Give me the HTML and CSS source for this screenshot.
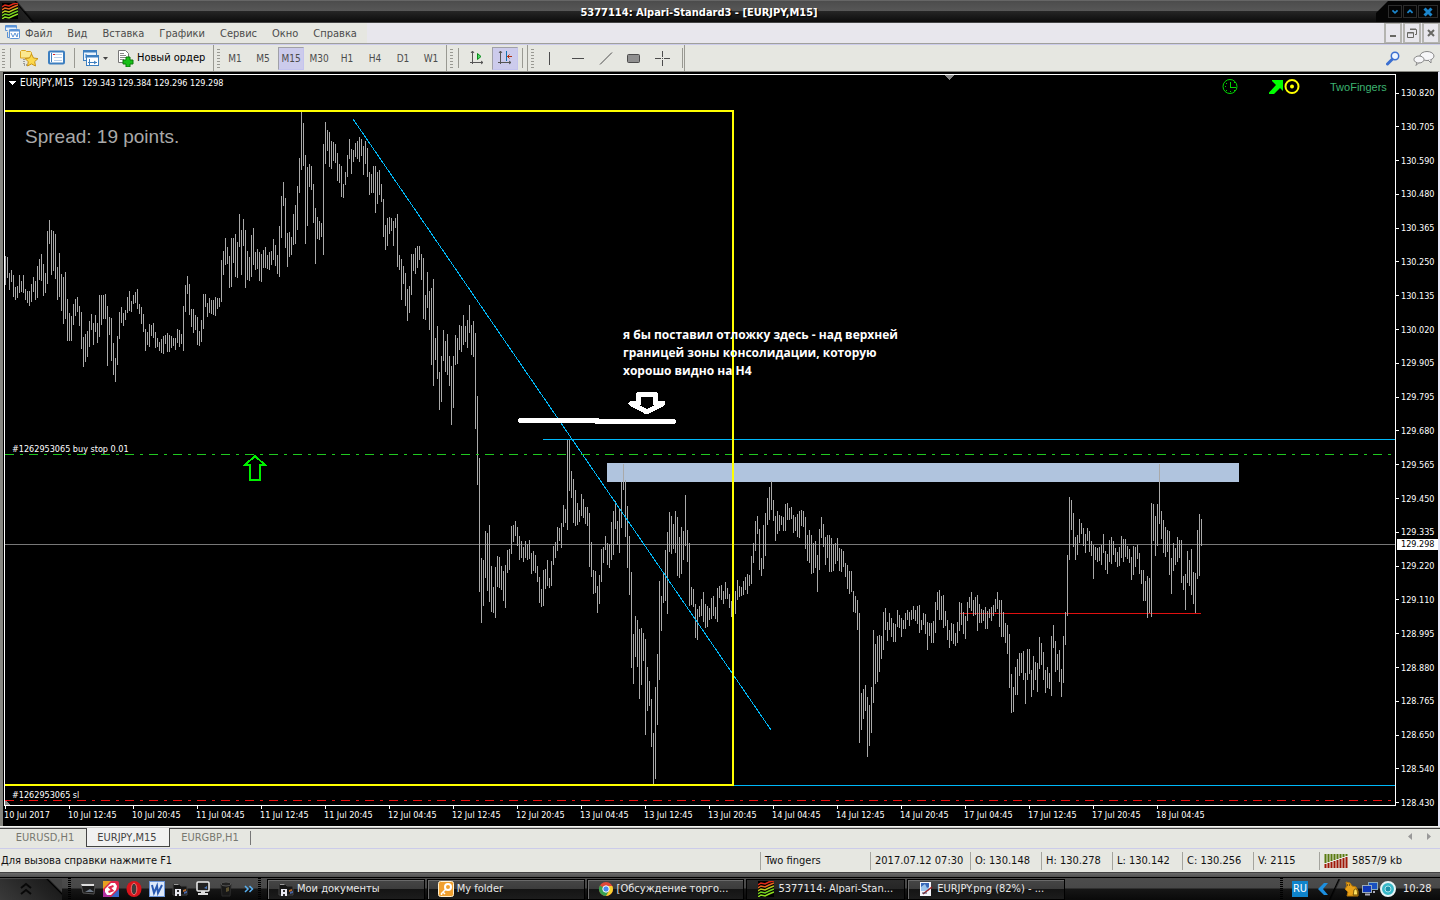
FILE: index.html
```html
<!DOCTYPE html>
<html lang="ru">
<head>
<meta charset="utf-8">
<title>5377114: Alpari-Standard3 - [EURJPY,M15]</title>
<link rel="stylesheet" href="styles.css">
</head>
<body>
<svg class="defs" aria-hidden="true">
  <symbol id="alpari" viewBox="0 0 16 16">
    <rect width="16" height="16" fill="#000"/>
    <g fill="none" stroke-width="1.5">
      <path stroke="#e02818" d="M0 4l3-2 4 1 4-2 5-1"/>
      <path stroke="#e86820" d="M0 7l3-2 4 1 4-2 5-2"/>
      <path stroke="#b8c820" d="M0 10l3-2 4 1 4-2 5-2"/>
      <path stroke="#70d020" d="M0 13l3-2 4 1 4-2 5-2"/>
      <path stroke="#90e020" d="M0 16l3-2 4 1 4-2 5-2"/>
    </g>
  </symbol>
  <symbol id="folder-dark" viewBox="0 0 16 16">
    <path d="M1 3h6l2 2h6v9H1z" fill="#161616" stroke="#444"/>
    <path d="M2 3h4l1 1H2z" fill="#999"/>
    <path d="M3 15V8h6v7H7v-2H5v2z" fill="#e8e8f0"/>
    <path d="M5 9h2v2H5z" fill="#333"/>
    <path d="M11 9l3-1v2l-3 1z" fill="#b46a30"/>
    <path d="M12 11l3-1v2l-3 1z" fill="#4a68a8"/>
  </symbol>
</svg>

<header class="titlebar">
  <span class="title-icon"><svg width="16" height="16"><use href="#alpari"/></svg></span>
  <h1>5377114: Alpari-Standard3 - [EURJPY,M15]</h1>
  <div class="win-buttons">
    <button type="button" aria-label="Свернуть"><svg width="12" height="12" viewBox="0 0 14 12"><path d="M4 4l3 3 3-3"/></svg></button>
    <button type="button" aria-label="Развернуть"><svg width="12" height="12" viewBox="0 0 14 12"><path d="M4 7l3-3 3 3"/></svg></button>
    <button type="button" aria-label="Закрыть" class="wide"><svg width="14" height="12" viewBox="0 0 14 12"><path class="cross" d="M3.500 2.500l7 7M10.500 2.500l-7 7"/></svg></button>
  </div>
</header>

<nav class="menubar">
  <div class="menu">
    <svg width="16" height="16" viewBox="0 0 16 16" fill="none" stroke="#5b93d6">
      <path d="M2.500 5.500h-2v-5h11v3" fill="#e8f2fc"/><path d="M1 1.500h10" stroke-width="2"/>
      <rect x="4.500" y="4.500" width="10" height="9" rx="1" fill="#fff"/><path d="M4 5.500h11" stroke-width="2"/>
      <path d="M6 8l2 4 2-4 2 4 1-4M2.500 7v5.500h2"/>
    </svg>
    <button type="button">Файл</button><button type="button">Вид</button><button type="button">Вставка</button><button type="button">Графики</button><button type="button">Сервис</button><button type="button">Окно</button><button type="button">Справка</button>
  </div>
  <div class="mdi">
    <button type="button" aria-label="Свернуть окно"><svg width="12" height="12" viewBox="0 0 12 12"><path d="M3 9h6" stroke-width="2"/></svg></button>
    <button type="button" aria-label="Восстановить окно"><svg width="12" height="12" viewBox="0 0 12 12"><path d="M4 2.500h6.500v5H9M1.500 5.500h6v5h-6zM1.500 6h6M4 2h6"/></svg></button>
    <button type="button" aria-label="Закрыть окно"><svg width="12" height="12" viewBox="0 0 12 12"><path d="M3 3l6 6M9 3l-6 6" stroke-width="2"/></svg></button>
  </div>
</nav>

<div class="toolbar">
  <div class="group g-main">
    <i class="grip"></i><i class="sep"></i>
    <button type="button" class="tool" aria-label="Шаблоны"><svg width="20" height="18" viewBox="0 0 20 18"><path d="M1.500 2.500l1-1h4l1 1h4l1 1v5.500h-11z" fill="#fbe88f" stroke="#d9a422"/><path d="M5 10v6h3" fill="none" stroke="#555" stroke-dasharray="1 1"/><path d="M12.500 5l2 4 4.500.6-3.300 3 .8 4.400-4-2.100-4 2.100.8-4.400-3.300-3 4.500-.6z" fill="#fcd94c" stroke="#c99416"/></svg></button>
    <button type="button" class="tool" aria-label="Обзор рынка"><svg width="18" height="16" viewBox="0 0 18 16"><rect x="1" y="1.500" width="15" height="12" rx="1" fill="#fff" stroke="#3d7fc0" stroke-width="2"/><path d="M3.500 3v9" stroke="#3d7fc0"/><path d="M6 4.500h8M6 7.500h8M6 10.500h8" stroke="#b9cfe8"/><path d="M5 4.500h2" stroke="#d22"/></svg></button>
    <i class="sep"></i>
    <button type="button" class="tool tool-drop" aria-label="Новый график"><svg width="26" height="18" viewBox="0 0 26 18" fill="none" stroke="#3d7fc0"><rect x="1.500" y="1.500" width="13" height="10" fill="#eaf3fc"/><path d="M1 2.500h14" stroke-width="2"/><rect x="4.500" y="6.500" width="12" height="10" fill="#fff"/><path d="M4 7.500h13" stroke-width="2"/><path d="M6 13.500h9M7.500 10v6M12 12l2 1.500-2 1.500M4 5v4"/><path d="M21 8h5l-2.500 3z" fill="#444" stroke="none"/></svg></button>
    <button type="button" class="tool order"><svg width="18" height="18" viewBox="0 0 18 18"><path d="M1.500 1.500h7l3 3v9h-10z" fill="#fff" stroke="#777"/><path d="M3 4.500h4M3 6.500h6M3 8.500h6M3 10.500h4" stroke="#888"/><path d="M9 8h4v3h3v4h-3v3H9v-3H6v-4h3z" fill="#18c018" stroke="#0a7a0a"/></svg>Новый ордер</button>
  </div>
  <div class="group g-tf">
    <i class="grip"></i>
    <button type="button" class="tf">M1</button><button type="button" class="tf">M5</button><button type="button" class="tf on">M15</button><button type="button" class="tf">M30</button><button type="button" class="tf">H1</button><button type="button" class="tf">H4</button><button type="button" class="tf">D1</button><button type="button" class="tf">W1</button>
  </div>
  <div class="group g-shift">
    <i class="grip"></i><i class="sep"></i>
    <button type="button" class="sq" aria-label="Автопрокрутка"><svg width="16" height="16" viewBox="0 0 16 16"><path d="M3.500 1v13M1 12.500h13M2 3l1.500-2L5 3M12 11l2 1.500-2 1.500" fill="none" stroke="#555"/><path d="M8.500 3.500v6l3.500-3z" fill="#4fdc6a" stroke="#0a8a1a"/></svg></button>
    <button type="button" class="sq on" aria-label="Сдвиг графика"><svg width="16" height="16" viewBox="0 0 16 16"><path d="M3.500 1v13M1 12.500h13M2 3l1.500-2L5 3M12 11l2 1.500-2 1.500" fill="none" stroke="#555"/><path d="M9.500 1v10" stroke="#1173b0"/><path d="M10 6.500h5M12.500 4.500l-2 2 2 2" fill="none" stroke="#b03010"/></svg></button>
    <i class="sep"></i>
  </div>
  <div class="group g-draw">
    <i class="grip"></i>
    <button type="button" class="draw" aria-label="Вертикальная линия"><svg width="16" height="16"><path d="M7.500 2v13"/></svg></button>
    <button type="button" class="draw" aria-label="Горизонтальная линия"><svg width="16" height="16"><path d="M2 8.500h12"/></svg></button>
    <button type="button" class="draw" aria-label="Трендовая линия"><svg width="16" height="16"><path d="M2 14.500L14 2.500"/></svg></button>
    <button type="button" class="draw" aria-label="Прямоугольник"><svg width="16" height="16"><rect x="1.500" y="4.500" width="12" height="8" rx="1" fill="#909090"/></svg></button>
    <button type="button" class="draw" aria-label="Перекрестие"><svg width="16" height="16"><path d="M8.500 1v6M8.500 10v6M1 8.500h6M10 8.500h6M8 8.500h1"/></svg></button>
    <i class="sep"></i>
  </div>
  <div class="toolbar-end">
    <button type="button" class="tool" aria-label="Поиск"><svg width="15" height="15" viewBox="0 0 15 15"><path d="M1.500 13L6 8.500" stroke="#3b6fd0" stroke-width="3" stroke-linecap="round"/><circle cx="9" cy="5" r="3.700" fill="#eef6ff" stroke="#3b6fd0" stroke-width="1.500"/></svg></button>
    <button type="button" class="tool" aria-label="Сообщения"><svg width="22" height="17" viewBox="0 0 22 17" fill="#f6f6f8" stroke="#888"><ellipse cx="14" cy="6" rx="7" ry="4.500"/><path d="M15 10l3 3v-3.500"/><ellipse cx="6" cy="9.500" rx="5" ry="3.500"/><path d="M4 12.500l-1 3 3-3"/></svg></button>
  </div>
</div>

<main class="chart">
  <div class="plot">
    <svg class="canvas" viewBox="5 75 1390 730" preserveAspectRatio="xMinYMin meet">
      <path d="M8 81h8l-4 4z" fill="#fff"/>
      <path d="M944 75h10l-5 5z" fill="#888"/>
      <path d="M5 800v5h6z" fill="#888"/>
      <rect x="607" y="463" width="632" height="19" fill="#b0c4de"/>
      <path d="M5 544.500H1395" stroke="#787878"/>
      <path d="M960 613.500H1201" stroke="#e01010"/>
      <path id="bars" stroke="#a9a9a9"/>
      <path d="M543 439.500H1395M734 785.500H1395M353 119L771 730" stroke="#00b8f8" fill="none"/>
      <path class="pending" d="M5 454.500H1392" stroke="#20c820"/>
      <path class="pending" d="M5 800.500H1392" stroke="#f01010"/>
      <path d="M5 111H733V785H5" fill="none" stroke="#ff0" stroke-width="2"/>
      <path d="M255 456l10 9h-5v15h-10v-15h-5z" fill="none" stroke="#00f000" stroke-width="2"/>
      <g fill="none" stroke="#fff" stroke-width="5" stroke-linecap="round" stroke-linejoin="round">
        <path d="M520.500 420.500H597M597 421.500H673.500M638.500 394.500H655.500V403.500H663L647 412L631 403.500H638.500Z"/>
      </g>
      <g fill="none" stroke="#00d800"><circle class="smooth" cx="1230" cy="86.500" r="7"/><path d="M1230.500 82v5h5M1225 86.500h1M1230.500 91v1M1226.500 83v1M1226.500 90v1M1234.500 90v1M1234.500 82v1"/></g>
      <path class="smooth" d="M1272 80h11v11l-3-3-6 6h-5v-1.500l7-7.500-4-4z" fill="#0f0"/>
      <circle cx="1292" cy="86.500" r="6.500" fill="none" stroke="#ff0" stroke-width="2"/><circle cx="1292" cy="86.500" r="2" fill="#ff0"/>
      <text class="symbol" x="20" y="86">EURJPY,M15</text>
      <text class="tiny" x="82" y="86">129.343</text><text class="tiny" x="118" y="86">129.384</text><text class="tiny" x="154" y="86">129.296</text><text class="tiny" x="190" y="86">129.298</text>
      <text class="tiny" x="12" y="452">#1262953065 buy stop 0.01</text>
      <text class="tiny" x="12" y="798">#1262953065 sl</text>
      <text class="spread" x="25" y="143">Spread: 19 points.</text>
      <text class="expert" x="1330" y="91">TwoFingers</text>
      <text class="note"><tspan x="623" y="339">я бы поставил отложку здесь - над верхней</tspan><tspan x="623" y="357">границей зоны консолидации, которую</tspan><tspan x="623" y="375">хорошо видно на H4</tspan></text>
    </svg>
  </div>
  <div class="prices">
    <span>130.820</span><span>130.705</span><span>130.590</span><span>130.480</span><span>130.365</span><span>130.250</span><span>130.135</span><span>130.020</span><span>129.905</span><span>129.795</span><span>129.680</span><span>129.565</span><span>129.450</span><span>129.335</span><span>129.220</span><span>129.110</span><span>128.995</span><span>128.880</span><span>128.765</span><span>128.650</span><span>128.540</span><span>128.430</span>
    <b class="now">129.298</b>
  </div>
  <div class="times">
    <span>10 Jul 2017</span><span>10 Jul 12:45</span><span>10 Jul 20:45</span><span>11 Jul 04:45</span><span>11 Jul 12:45</span><span>11 Jul 20:45</span><span>12 Jul 04:45</span><span>12 Jul 12:45</span><span>12 Jul 20:45</span><span>13 Jul 04:45</span><span>13 Jul 12:45</span><span>13 Jul 20:45</span><span>14 Jul 04:45</span><span>14 Jul 12:45</span><span>14 Jul 20:45</span><span>17 Jul 04:45</span><span>17 Jul 12:45</span><span>17 Jul 20:45</span><span>18 Jul 04:45</span>
  </div>
</main>

<div class="tabs">
  <button type="button">EURUSD,H1</button><button type="button" class="on">EURJPY,M15</button><button type="button">EURGBP,H1</button><i></i>
  <div class="tab-scroll">
    <button type="button" aria-label="Назад"><svg width="5" height="7"><path d="M4 0v7L0 3.500z"/></svg></button>
    <button type="button" aria-label="Вперёд"><svg width="5" height="7"><path d="M0 0v7l4-3.500z"/></svg></button>
  </div>
</div>

<footer class="status">
  <span class="help">Для вызова справки нажмите F1</span>
  <span class="c110">Two fingers</span><span class="c100">2017.07.12 07:30</span><span class="c71">O: 130.148</span><span class="c71">H: 130.278</span><span class="c70">L: 130.142</span><span class="c71">C: 130.256</span><span class="c66">V: 2115</span>
  <span class="c121"><svg width="24" height="14" viewBox="0 0 24 14"><path d="M1.500 0v9M4.500 0v8M7.500 0v7M10.500 0v6M13.500 0v5M16.500 0v4M19.500 0v3M22.500 0v2" stroke="#5a7a10" stroke-width="2"/><path d="M1.500 10v4M4.500 9v5M7.500 8v6M10.500 7v7M13.500 6v8M16.500 5v9M19.500 4v10M22.500 3v11" stroke="#a01808" stroke-width="2"/></svg>5857/9 kb</span>
</footer>

<div class="taskbar">
  <button type="button" class="start" aria-label="Пуск"><svg width="14" height="14" viewBox="0 0 14 14" fill="none" stroke="#080808" stroke-width="2"><path d="M2 6l5-4 5 4M2 12l5-4 5 4"/></svg></button>
  <i class="dots"></i>
  <div class="quick">
    <button type="button" aria-label="Рабочий стол"><svg width="16" height="16" viewBox="0 0 16 16"><path d="M1 3h13l1 2-1 8-11-1z" fill="#1c1c1c" stroke="#555"/><path d="M1 3h13v2H2z" fill="#ddd"/><path d="M5 11l5-3 4 3z" fill="#6d7886"/></svg></button>
    <button type="button" aria-label="Программа"><svg width="16" height="16" viewBox="0 0 16 16"><rect width="16" height="16" rx="2" fill="#e0254c"/><path d="M0 0h8L0 8z" fill="#e8a020"/><path d="M16 16H8l8-8z" fill="#3868c8"/><path d="M8 16H0V9z" fill="#b030a0"/><path d="M2 8l6-6h4l2 3-1 4-5 5H4l-2-3z" fill="#fff"/><path d="M10.500 5l-4 1.500 3 3-4 1.500" stroke="#e0254c" stroke-width="2" fill="none"/></svg></button>
    <button type="button" aria-label="Opera"><svg width="16" height="16" viewBox="0 0 16 16"><ellipse cx="8" cy="8" rx="7.500" ry="8" fill="#d8141c"/><ellipse cx="8" cy="8" rx="2.800" ry="5.800" fill="#3c3c3c" stroke="#f07070"/></svg></button>
    <button type="button" aria-label="Word"><svg width="16" height="16" viewBox="0 0 16 16"><rect x=".5" y=".5" width="15" height="15" fill="#dce8fa" stroke="#6a94d8"/><path d="M3 4l2 8 3-7 1 7 4-8" fill="none" stroke="#2858b0" stroke-width="2"/></svg></button>
    <button type="button" aria-label="Документы"><svg width="16" height="16"><use href="#folder-dark"/></svg></button>
    <button type="button" aria-label="Компьютер"><svg width="16" height="16" viewBox="0 0 16 16"><rect x="2" y="1" width="12" height="9" rx="1" fill="#222" stroke="#eee" stroke-width="1.500"/><path d="M9 7l3-2v3z" fill="#4a78c0"/><path d="M6 10h4v2h3v2H3v-2h3z" fill="#ddd"/></svg></button>
    <button type="button" aria-label="Корзина"><svg width="16" height="16" viewBox="0 0 16 16"><path d="M3 3h10l-1 12H4z" fill="#181818" stroke="#2a2a2a"/><ellipse cx="8" cy="3" rx="5" ry="2" fill="#222" stroke="#555"/><path d="M8 7l3-1v4l-3 1z" fill="#5a5030"/></svg></button>
    <button type="button" aria-label="Ещё"><svg width="10" height="8" viewBox="0 0 10 8" fill="none" stroke="#58b0f0" stroke-width="1.500"><path d="M1 1l3 3-3 3M5.500 1l3 3-3 3"/></svg></button>
  </div>
  <i class="dots"></i>
  <div class="tasks">
    <button type="button"><svg width="16" height="16"><use href="#folder-dark"/></svg><span>Мои документы</span></button>
    <button type="button"><svg width="16" height="16" viewBox="0 0 16 16"><rect x=".5" y=".5" width="15" height="15" rx="2" fill="#f0a030" stroke="#fff0d0"/><circle cx="10" cy="6" r="3" fill="none" stroke="#fff" stroke-width="2"/><path d="M8 8l-4.500 4.500v1.500M5 11l2 2" stroke="#fff" stroke-width="1.500" fill="none"/></svg><span>My folder</span></button>
    <button type="button"><svg width="16" height="16" viewBox="0 0 16 16"><circle cx="8" cy="8" r="7" fill="#e04838"/><path d="M8 8L1.900 4.500A7 7 0 0 0 8 15l3-5z" fill="#38a050"/><path d="M8 8h0l3 2-3 5A7 7 0 0 0 14.300 5H8z" fill="#f8d030"/><circle cx="8" cy="8" r="3.200" fill="#4888f0" stroke="#fff"/></svg><span>[Обсуждение торго...</span></button>
    <button type="button" class="on"><svg width="16" height="16"><use href="#alpari"/></svg><span>5377114: Alpari-Stan...</span></button>
    <button type="button"><svg width="16" height="16" viewBox="0 0 16 16"><rect x="2" y="1" width="11" height="14" fill="#f4f4fa"/><rect x="3" y="2" width="8" height="8" fill="#3868b8"/><path d="M3 6l4-3 2 4 2-1v4H3z" fill="#9cc4ec"/><path d="M5 13l9-7" stroke="#a02020" stroke-width="1.500"/><path d="M4 12h5" stroke="#446" /></svg><span>EURJPY.png (82%) - ...</span></button>
  </div>
  <i class="dots push"></i>
  <button type="button" class="lang">RU</button>
  <button type="button" class="expand" aria-label="Показать значки"><svg width="10" height="12" viewBox="0 0 10 12"><path d="M6 0h4L5 6l5 6H6L0 6z" fill="#1c8fe0"/></svg></button>
  <div class="tray">
    <svg width="16" height="16" viewBox="0 0 16 16"><path d="M2 1l4 1 2 3 4 1 2 4v5H3l1-4-3-3 2-3z" fill="#e8a018" stroke="#b87808"/><path d="M9 14c1-1 0-6 2.500-6s1.500 5 2.500 6z" fill="#ffe060" stroke="#6a4a00"/><path d="M3 4h1M5 4h1" stroke="#222"/></svg>
    <svg width="16" height="16" viewBox="0 0 16 16"><rect x="6.500" y="1.500" width="9" height="7" fill="#1850c0" stroke="#8ab"/><rect x=".5" y="4.500" width="9" height="7" fill="#1038b8" stroke="#9ab"/><path d="M3 13.500h5M12 10v2" stroke="#aab" stroke-width="2"/></svg>
    <svg width="16" height="16" viewBox="0 0 16 16"><circle cx="8" cy="8" r="7" fill="#38b8c8" stroke="#e8f4f6" stroke-width="2"/><circle cx="8" cy="8" r="3" fill="#1a90a8" stroke="#a8e4ea"/></svg>
    <time>10:28</time>
  </div>
</div>
<script src="chart.js"></script>
</body>
</html>
```
FILE: styles.css
```css
* { box-sizing: border-box; }
body {
  margin: 0;
  min-height: 100vh;
  display: flex;
  flex-direction: column;
  overflow: hidden;
  background: #e6e7e1;
  color: #111;
  font: 11px/14px "DejaVu Sans Condensed", "Noto Sans", sans-serif;
}
button {
  margin: 0;
  padding: 0;
  border: 0;
  background: none;
  color: inherit;
  font: inherit;
  display: flex;
  align-items: center;
  justify-content: center;
}
svg { display: block; flex: none; }
i { flex: none; }
.defs { position: absolute; width: 0; height: 0; }

/* Title bar */
.titlebar {
  height: 23px;
  display: flex;
  align-items: stretch;
  border-top: 1px solid #666;
  border-bottom: 1px solid #444;
  background: linear-gradient(#4c4c4c 0, #575757 10px, #262626 10px, #0c0c0c 21px);
  color: #fff;
}
.title-icon {
  width: 64px;
  padding: 2px;
  background: linear-gradient(50deg, #111 0, #222 24px, #000 25px, transparent 27px);
}
.titlebar h1 {
  flex: 1;
  margin: 0;
  padding-right: 42px;
  text-align: center;
  font-size: 11px;
  line-height: 23px;
  text-shadow: 1px 1px 1px #000;
}
.win-buttons {
  width: 64px;
  padding: 4px 2px 4px 12px;
  display: flex;
  gap: 1px;
  background: linear-gradient(135deg, transparent 8px, #050505 9px);
}
.win-buttons button { width: 14px; border: 1px solid #2c2c2c; }
.win-buttons .wide { width: 20px; }
.win-buttons path { fill: none; stroke: #1c86cc; stroke-width: 2; }
.win-buttons .cross { stroke-width: 3; }

/* Menu */
.menubar {
  height: 21px;
  display: flex;
  justify-content: space-between;
  border-bottom: 1px solid #a0a09c;
  background: #e8e7ed;
  color: #4c4c4c;
}
.menu {
  display: flex;
  align-items: center;
  gap: 15px;
  padding: 1px 10px 0 5px;
  background: #e6e7e1;
}
.menu svg { margin: 0 -11px 1px 0; }
.mdi { display: flex; gap: 1px; }
.mdi button { width: 18px; border: 1px solid #b4b4b0; border-width: 1px 2px; }
.mdi path { fill: none; stroke: #686864; }

/* Toolbar */
.toolbar {
  height: 27px;
  display: flex;
  border-top: 1px solid #ccccea;
  background: #e6e7e1;
}
.group {
  display: flex;
  align-items: center;
  padding-left: 2px;
  border-right: 1px solid #999992;
}
.grip {
  width: 3px;
  height: 19px;
  background: repeating-linear-gradient(#999992 0 1px, transparent 1px 3px);
}
.sep { width: 1px; height: 20px; background: #999992; }
.g-main { width: 214px; }
.g-main .grip + .sep { margin: 0 8px 0 5px; }
.g-main .tool + .sep { margin: 0 7px 0 8px; }
.g-main .tool + .tool { margin-left: 9px; }
.g-main .order { gap: 2px; white-space: nowrap; color: #000; }
.g-tf { width: 233px; }
.tf { width: 28px; height: 23px; padding-top: 1px; color: #4c4c4c; font-size: 10px; }
.g-tf .grip { margin: 0 1px; }
.tf.on, .sq.on {
  background: #cccbec;
  border: 1px solid #a0a0a8;
  border-right-color: #c4c4ee;
  border-bottom-color: #c4c4ee;
}
.tf.on { width: 26px; margin: 0 1px; }
.g-shift { width: 81px; }
.g-shift .grip { margin-left: 1px; }
.g-shift .grip + .sep { margin: 0 5px; }
.sq { width: 26px; height: 23px; }
.sq + .sq { margin-left: 2px; }
.sq + .sep { margin-left: 4px; }
.g-draw { width: 157px; }
.g-draw .grip { margin: 0 8px 0 1px; }
.draw { width: 28px; height: 23px; padding-right: 12px; }
.draw path, .draw rect { stroke: #4c4c4c; }
.draw path { fill: none; }
.toolbar-end {
  flex: 1;
  display: flex;
  align-items: center;
  justify-content: flex-end;
  gap: 12px;
  padding-right: 5px;
}

/* Chart */
.chart {
  flex: 1;
  min-height: 0;
  display: grid;
  grid-template-columns: minmax(0, 1fr) 42px;
  grid-template-rows: minmax(0, 1fr) 20px;
  padding: 2px 0 0 1px;
  border: solid #868680;
  border-width: 1px 2px 0 3px;
  border-right-color: #e4e4f6;
  background: #000;
  color: #fff;
  font-size: 9px;
}
.plot { border: 1px solid #fff; min-height: 0; min-width: 0; }
.canvas { width: 100%; height: 100%; }
.canvas path { shape-rendering: crispEdges; }
.canvas .smooth { shape-rendering: auto; }
.pending { stroke-dasharray: 9 6 3 6; }
.tiny { font-size: 9px; fill: #fff; }
.symbol { font-size: 10px; fill: #fff; }
.spread { font: 19px "Liberation Sans", sans-serif; fill: #a9a9a9; }
.expert { font: 11px "Liberation Sans", sans-serif; fill: #3cb371; }
.note { font: bold 12px "Open Sans", sans-serif; fill: #fff; }
.prices {
  grid-row: span 2;
  position: relative;
  display: flex;
  flex-direction: column;
  justify-content: space-between;
  padding: 12px 0 16px;
}
.prices span { display: flex; align-items: center; gap: 2px; }
.prices span::before { content: ""; width: 3px; height: 1px; background: #fff; }
.now {
  position: absolute;
  top: 465px;
  left: 1px;
  right: 0;
  padding-left: 4px;
  background: #fff;
  color: #000;
  font-weight: normal;
  line-height: 11px;
}
.times { display: flex; overflow: hidden; }
.times span { flex: none; width: 64px; padding-top: 2px; white-space: nowrap; position: relative; }
.times span::before {
  content: "";
  position: absolute;
  left: 1px;
  top: 0;
  width: 1px;
  height: 3px;
  background: #fff;
}

/* Chart tabs */
.tabs {
  height: 23px;
  display: flex;
  align-items: flex-start;
  padding-left: 2px;
  border-top: 1px solid #f4f4f0;
  border-bottom: 1px solid #ccccea;
  box-shadow: inset 0 1px #c8c8c8, inset 0 2px #444;
  color: #77776f;
}
.tabs > button { height: 19px; width: 84px; margin-top: 1px; padding-left: 2px; }
.tabs > button.on {
  padding: 1px 2px 0 0;
  background: #f1f1f1;
  border: 1px solid #444;
  border-top: 0;
  color: #444;
}
.tabs > button:nth-child(3) { width: 78px; }
.tabs > i { width: 1px; height: 14px; margin: 4px 0 0 2px; background: #777; }
.tab-scroll { display: flex; gap: 14px; margin: 6px 8px 0 auto; }
.tab-scroll path { fill: #999; }

/* Status bar */
.status { height: 23px; display: flex; align-items: center; padding-top: 1px; }
.status span {
  display: flex;
  align-items: center;
  height: 18px;
  padding-left: 4px;
  border-left: 1px solid #a4a49e;
  white-space: nowrap;
}
.status .help { flex: 1; padding-left: 1px; border: 0; }
.status .c110 { width: 110px; }
.status .c100 { width: 100px; }
.status .c71 { width: 71px; }
.status .c70 { width: 70px; }
.status .c66 { width: 66px; }
.status .c121 { width: 121px; gap: 4px; }

/* Taskbar */
.taskbar {
  height: 29px;
  display: flex;
  align-items: center;
  padding-top: 4px;
  border-top: 1px solid #444;
  background: linear-gradient(#6a6a6a 0, #505050 4px, #000 4px, #000 5px, #4c4c4c 5px, #484848 15px, #161616 16px, #080808 28px);
  color: #e8e8e8;
}
.start { width: 62px; height: 21px; padding-right: 10px; background: linear-gradient(45deg, #3a3a3a 0, #1c1c1c 80%, #000 82%, #444 85%); }
.dots { width: 3px; height: 22px; background: repeating-linear-gradient(#000 0 1px, transparent 1px 2px); margin-left: 6px; }
.quick { display: flex; align-items: center; gap: 7px; width: 187px; padding-left: 9px; }
.quick button:last-child { margin-left: 3px; }
.quick + .dots { margin-left: 0; }
.tasks { flex: 0 1 804px; display: flex; gap: 2px; padding-left: 6px; min-width: 0; }
.tasks button {
  flex: 1;
  min-width: 0;
  height: 21px;
  justify-content: flex-start;
  gap: 3px;
  padding-left: 10px;
  border: 1px solid #000;
  box-shadow: inset 1px 1px #6a6a6a;
  background: linear-gradient(#464646 0, #3c3c3c 9px, #141414 9px, #1e1e1e 21px);
  white-space: nowrap;
}
.tasks button.on {
  gap: 4px;
  padding-left: 11px;
  box-shadow: none;
  background: linear-gradient(#2c2c2c 0, #262626 9px, #101010 9px, #161616 21px);
}
.push { margin-left: auto; }
.lang { width: 16px; height: 16px; margin: 0 10px 0 9px; background: #0f84cc; color: #fff; }
.tray {
  display: flex;
  align-items: center;
  gap: 2px;
  height: 21px;
  padding: 0 9px 0 16px;
  background: linear-gradient(115deg, transparent 9px, #000 10px, transparent 12px);
}
.tray time { margin-left: 5px; width: 28px; }
```
FILE: chart.js
```js
// High and low of each bar in plot units; bars start at x = 5 and are 2 units apart.
const ranges = `
256-285 257-278 273-290 270-282 275-297 287-300 286-298 275-293 281-292 275-293 289-300 291-303 291-306 284-302 277-292 281-300
266-298 259-280 254-281 264-296 273-293 231-284 220-244 230-275 231-271 234-279 267-300 253-297 274-311 277-324 272-319 299-341
313-341 316-341 304-325 299-316 297-312 306-326 312-349 337-367 334-362 331-357 321-347 314-330 323-345 315-332 323-343 295-337
295-325 295-319 294-319 306-366 317-335 318-361 343-375 358-382 336-365 312-339 307-323 313-326 310-320 297-313 291-311 301-312
295-304 292-303 289-309 304-314 307-324 314-332 329-351 332-345 324-347 325-336 323-338 332-348 338-347 342-351 339-353 336-354
335-344 333-352 335-352 336-348 338-346 338-350 329-343 330-347 334-344 306-351 285-312 276-294 284-315 309-327 309-333 315-330
317-345 331-346 320-342 294-329 294-307 303-317 298-313 300-314 300-315 297-316 298-309 298-307 260-302 251-275 238-265 247-264
256-288 238-287 238-263 234-277 242-278 214-247 230-275 219-246 230-288 251-280 257-281 235-277 228-265 252-270 249-269 252-281
254-282 250-268 247-268 255-269 252-270 251-265 239-260 245-266 255-274 226-277 196-238 182-206 198-248 233-267 232-257 237-255
214-245 205-244 186-230 158-193 112-170 123-166 155-244 167-226 164-187 166-190 184-223 208-264 217-239 221-240 223-237 144-255
122-164 130-151 132-167 141-169 142-161 144-163 153-181 164-183 166-197 184-198 172-185 155-177 139-159 149-174 150-162 143-157
141-159 137-162 139-156 146-175 141-164 148-177 172-195 174-193 166-193 166-213 172-204 170-195 184-202 199-237 225-250 218-246
217-234 218-231 221-246 218-228 214-267 255-270 259-300 266-284 273-306 289-321 286-313 254-295 254-271 248-274 246-268 246-260
254-280 258-319 295-320 272-308 291-330 288-365 279-386 338-360 326-379 372-410 356-402 330-361 341-372 334-375 356-386 366-425
356-408 335-365 338-364 325-350 326-352 315-345 326-342 320-348 305-333 325-355 321-357 333-429 396-485 458-592 558-623 560-606
531-578 533-591 525-602 566-612 587-613 567-618 556-587 557-588 566-590 571-601 565-608 550-573 549-570 526-554 525-542 521-536
527-546 536-560 541-558 547-562 541-558 544-560 540-559 553-574 551-571 555-573 566-582 577-603 589-607 570-606 569-589 560-586
578-588 561-586 546-565 542-558 527-551 528-541 523-548 505-527 509-523 440-530 440-491 471-498 479-523 490-526 503-525 510-522
494-516 499-518 507-524 507-526 513-567 542-577 570-594 571-593 586-613 575-604 549-582 547-563 536-550 543-565 544-568 522-560
511-555 501-529 521-545 508-553 482-528 464-490 480-537 506-568 536-595 572-668 634-684 616-657 620-667 629-699 628-685 633-661
639-735 667-711 681-706 699-747 733-784 687-779 654-725 581-680 596-631 572-603 550-601 532-614 512-552 516-554 524-549 511-553
517-576 537-578 527-574 531-560 495-546 530-562 543-606 587-605 589-607 604-638 609-640 606-617 599-616 592-622 604-628 606-627
608-620 598-619 596-616 607-619 588-622 586-598 585-600 591-604 582-599 588-599 594-608 601-617 598-614 591-614 580-600 586-597
587-596 581-595 577-590 574-594 575-586 556-584 543-563 521-551 516-534 529-570 558-576 525-569 513-556 498-525 487-520 481-510
500-521 516-541 511-534 515-531 516-525 517-531 504-531 503-520 508-520 507-519 515-533 517-531 514-537 511-538 510-526 511-527
517-549 535-561 530-563 535-574 543-573 541-568 555-592 529-570 517-538 524-547 537-565 535-558 535-572 538-572 544-571 543-564
538-561 548-571 549-572 551-567 563-577 565-589 571-594 571-592 591-612 596-613 600-630 613-743 693-730 689-719 685-711 697-757
705-746 687-733 630-703 644-684 636-682 635-672 636-659 612-650 608-630 622-641 613-630 618-637 623-642 624-642 610-627 615-628
618-637 620-629 613-629 610-620 612-626 610-620 606-619 610-621 606-624 605-633 620-630 613-625 614-634 622-650 623-636 623-643
621-643 602-633 592-610 590-620 596-620 595-628 611-626 620-640 630-648 623-641 624-644 633-646 622-643 602-631 603-625 612-634
616-639 602-621 597-608 592-611 600-616 597-615 595-631 604-623 609-623 610-621 607-629 611-629 609-618 607-621 605-616 599-612
592-609 600-627 600-637 612-637 623-643 625-654 634-688 674-713 687-712 667-695 659-695 653-676 653-673 651-680 673-704 649-680
649-674 670-697 656-690 662-680 663-692 637-669 643-665 652-680 670-693 667-688 673-689 636-696 625-648 641-672 654-670 650-682
669-697 636-683 612-645 555-616 497-560 500-530 513-547 537-560 535-555 519-543 523-534 528-546 534-553 528-541 531-552 541-556
545-579 547-560 548-562 547-561 545-565 534-553 551-570 554-574 540-562 537-564 541-555 548-562 552-567 547-566 536-558 539-562
539-557 546-559 549-563 557-580 546-575 547-567 545-559 553-574 570-584 570-601 581-601 576-618 578-613 503-617 504-541 516-556
504-546 464-524 511-539 520-553 527-557 530-552 531-575 558-594 543-571 548-565 537-562 540-558 540-583 576-590 574-610 551-583
560-586 549-595 572-604 573-613 530-579 514-576 519-546`;

const d = ranges.trim().split(/\s+/).map((pair, i) => {
  const [high, low] = pair.split("-");
  return `M${5.5 + 2 * i} ${high}V${low}`;
}).join("");
document.getElementById("bars").setAttribute("d", d);
```
